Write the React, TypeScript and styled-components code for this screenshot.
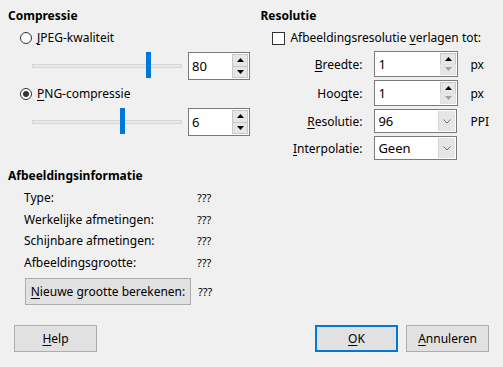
import styled, { createGlobalStyle } from "styled-components";

const GlobalStyle = createGlobalStyle`
  html, body {
    margin: 0;
    padding: 0;
    background: #f0f0f0;
  }
  body {
    font-family: "Segoe UI", "Noto Sans", "Liberation Sans", sans-serif;
    font-size: 12px;
    color: #000;
  }
`;

const Dialog = styled.div`
  width: 503px;
  height: 367px;
  box-sizing: border-box;
  padding: 8px 14px 0 8px;
  display: flex;
  flex-direction: column;
  background: #f0f0f0;
`;

const Top = styled.div`
  display: flex;
`;

const LeftCol = styled.div`
  width: 254px;
  display: flex;
  flex-direction: column;
`;

const RightCol = styled.div`
  flex: 1;
  display: flex;
  flex-direction: column;
`;

const SectionTitle = styled.div`
  font-weight: bold;
  line-height: 16px;
  height: 16px;
`;

const Mnemonic = styled.span`
  text-decoration: underline;
  text-underline-offset: 2px;
  text-decoration-thickness: 1px;
  text-decoration-skip-ink: none;
`;

const OptionRow = styled.label<{ $indent: number }>`
  display: flex;
  align-items: center;
  gap: 5px;
  height: 16px;
  line-height: 16px;
  margin-top: 6px;
  padding-left: ${({ $indent }) => $indent}px;
`;

const Radio = styled.span<{ $checked?: boolean }>`
  width: 12px;
  height: 12px;
  box-sizing: border-box;
  border: 1px solid #333;
  border-radius: 50%;
  background: #fff;
  display: flex;
  align-items: center;
  justify-content: center;
  &::after {
    content: "";
    display: ${({ $checked }) => ($checked ? "block" : "none")};
    width: 6px;
    height: 6px;
    border-radius: 50%;
    background: #333;
  }
`;

const Checkbox = styled.span`
  width: 13px;
  height: 13px;
  box-sizing: border-box;
  border: 1px solid #333;
  background: #fff;
`;

const SliderRow = styled.div`
  display: flex;
  align-items: center;
  gap: 6px;
  height: 28px;
  margin-top: 6px;
  padding-left: 24px;
`;

const Track = styled.div`
  position: relative;
  width: 150px;
  height: 4px;
  box-sizing: border-box;
  background: #e7eaea;
  border: 1px solid #d6d6d6;
`;

const Thumb = styled.div`
  position: absolute;
  top: -13px;
  width: 5px;
  height: 26px;
  background: #0078d7;
`;

const SpinBox = styled.div<{ $w: number; $h: number }>`
  width: ${({ $w }) => $w}px;
  height: ${({ $h }) => $h}px;
  box-sizing: border-box;
  border: 1px solid #7a7a7a;
  background: #fff;
  display: flex;
  align-items: center;
  padding: 1px 1px 1px 0;
`;

const FieldText = styled.span`
  flex: 1;
  padding-left: 3px;
  font-size: 13px;
`;

const SpinButtons = styled.div`
  width: 16px;
  align-self: stretch;
  display: flex;
  flex-direction: column;
`;

const SpinButton = styled.div<{ $disabled?: boolean }>`
  flex: 1;
  background: #e6e6e6;
  border: 1px solid ${({ $disabled }) => ($disabled ? "#e0e0e0" : "#c8c8c8")};
  display: flex;
  align-items: center;
  justify-content: center;
  & + & {
    margin-top: -1px;
  }
`;

const DropButton = styled.div`
  width: 16px;
  align-self: stretch;
  background: #e6e6e6;
  border-left: 1px solid #d4d4d4;
  display: flex;
  align-items: center;
  justify-content: center;
`;

const ResGrid = styled.div`
  display: grid;
  grid-template-columns: 102px 84px auto;
  grid-template-rows: 26px 26px 24px 24px;
  column-gap: 12px;
  row-gap: 3px;
  align-items: center;
  margin-top: 5px;
`;

const FieldLabel = styled.span`
  text-align: right;
`;

const Unit = styled.span``;

const InfoSection = styled.div`
  margin-top: 8px;
  display: flex;
  flex-direction: column;
`;

const InfoGrid = styled.div`
  display: grid;
  grid-template-columns: 173px auto;
  row-gap: 5.6px;
  line-height: 16px;
  padding-left: 16px;
  margin-top: 6px;
`;

const Value = styled.span`
  font-size: 11px;
`;

const ButtonRow = styled.div`
  display: flex;
  align-items: center;
  gap: 7px;
  margin-top: 7px;
  padding-left: 17px;
`;

const PushButton = styled.button<{ $w: number; $default?: boolean }>`
  width: ${({ $w }) => $w}px;
  height: 27px;
  box-sizing: border-box;
  background: #e1e1e1;
  border: ${({ $default }) =>
    $default ? "2px solid #0078d7" : "1px solid #adadad"};
  font: inherit;
  color: #000;
  padding: 0;
`;

const Footer = styled.div`
  display: flex;
  align-items: center;
  gap: 8px;
  margin-top: 20px;
  padding-left: 6px;
`;

const Spacer = styled.div`
  flex: 1;
`;

const UpArrow = ({ disabled }: { disabled?: boolean }) => (
  <svg width="7" height="4" viewBox="0 0 7 4">
    <path d="M0 4 L3.5 0 L7 4 Z" fill={disabled ? "#a0a0a0" : "#000"} />
  </svg>
);

const DownArrow = ({ disabled }: { disabled?: boolean }) => (
  <svg width="7" height="4" viewBox="0 0 7 4">
    <path d="M0 0 L3.5 4 L7 0 Z" fill={disabled ? "#a0a0a0" : "#000"} />
  </svg>
);

const Chevron = () => (
  <svg width="8" height="5" viewBox="0 0 8 5">
    <path d="M0.5 0.5 L4 4 L7.5 0.5" fill="none" stroke="#707070" strokeWidth="1" />
  </svg>
);

const Spin = ({ value, w, h, atMin }: { value: string; w: number; h: number; atMin?: boolean }) => (
  <SpinBox $w={w} $h={h}>
    <FieldText>{value}</FieldText>
    <SpinButtons>
      <SpinButton>
        <UpArrow />
      </SpinButton>
      <SpinButton $disabled={atMin}>
        <DownArrow disabled={atMin} />
      </SpinButton>
    </SpinButtons>
  </SpinBox>
);

const Combo = ({ value }: { value: string }) => (
  <SpinBox $w={83} $h={24}>
    <FieldText>{value}</FieldText>
    <DropButton>
      <Chevron />
    </DropButton>
  </SpinBox>
);

const info = [
  "Type:",
  "Werkelijke afmetingen:",
  "Schijnbare afmetingen:",
  "Afbeeldingsgrootte:",
];

export default function App() {
  return (
    <>
      <GlobalStyle />
      <Dialog>
        <Top>
          <LeftCol>
            <SectionTitle>Compressie</SectionTitle>
            <OptionRow $indent={12}>
              <Radio />
              <span>
                <Mnemonic>J</Mnemonic>PEG-kwaliteit
              </span>
            </OptionRow>
            <SliderRow>
              <Track>
                <Thumb style={{ left: "113px" }} />
              </Track>
              <Spin value="80" w={62} h={28} />
            </SliderRow>
            <OptionRow $indent={12}>
              <Radio $checked />
              <span>
                <Mnemonic>P</Mnemonic>NG-compressie
              </span>
            </OptionRow>
            <SliderRow>
              <Track>
                <Thumb style={{ left: "87px" }} />
              </Track>
              <Spin value="6" w={62} h={28} />
            </SliderRow>
          </LeftCol>
          <RightCol>
            <SectionTitle>Resolutie</SectionTitle>
            <OptionRow $indent={12}>
              <Checkbox />
              <span>
                Afbeeldingsresolutie <Mnemonic>v</Mnemonic>erlagen tot:
              </span>
            </OptionRow>
            <ResGrid>
              <FieldLabel>
                <Mnemonic>B</Mnemonic>reedte:
              </FieldLabel>
              <Spin value="1" w={84} h={26} atMin />
              <Unit>px</Unit>
              <FieldLabel>
                Hoo<Mnemonic>g</Mnemonic>te:
              </FieldLabel>
              <Spin value="1" w={84} h={26} atMin />
              <Unit>px</Unit>
              <FieldLabel>
                <Mnemonic>R</Mnemonic>esolutie:
              </FieldLabel>
              <Combo value="96" />
              <Unit>PPI</Unit>
              <FieldLabel>
                <Mnemonic>I</Mnemonic>nterpolatie:
              </FieldLabel>
              <Combo value="Geen" />
              <Unit />
            </ResGrid>
          </RightCol>
        </Top>
        <InfoSection>
          <SectionTitle>Afbeeldingsinformatie</SectionTitle>
          <InfoGrid>
            {info.map((label) => (
              <>
                <span key={label}>{label}</span>
                <Value key={label + "v"}>???</Value>
              </>
            ))}
          </InfoGrid>
          <ButtonRow>
            <PushButton $w={166}>
              <Mnemonic>N</Mnemonic>ieuwe grootte berekenen:
            </PushButton>
            <Value>???</Value>
          </ButtonRow>
        </InfoSection>
        <Footer>
          <PushButton $w={83}>
            <Mnemonic>H</Mnemonic>elp
          </PushButton>
          <Spacer />
          <PushButton $w={83} $default>
            <Mnemonic>O</Mnemonic>K
          </PushButton>
          <PushButton $w={83}>
            <Mnemonic>A</Mnemonic>nnuleren
          </PushButton>
        </Footer>
      </Dialog>
    </>
  );
}
